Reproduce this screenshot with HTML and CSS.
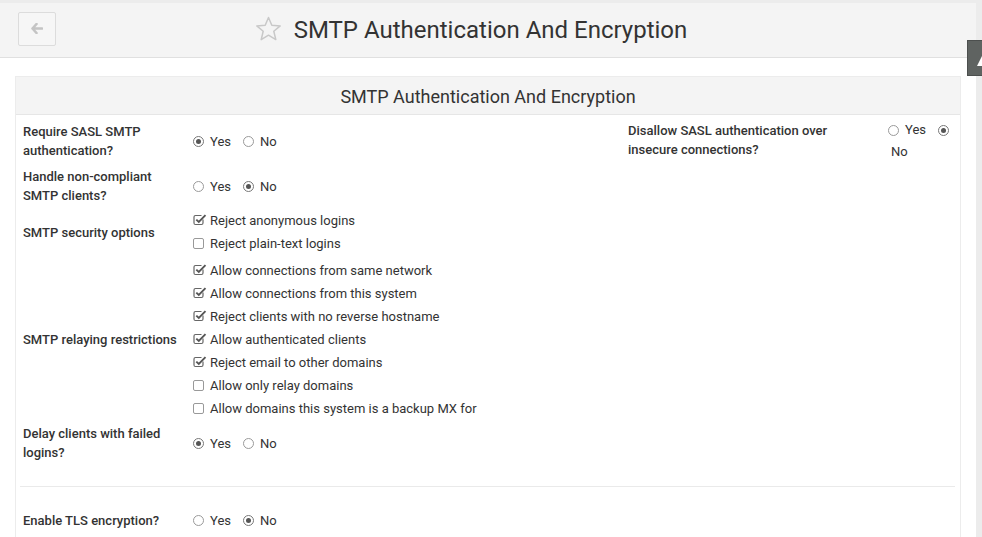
FILE: index.html
```html
<!DOCTYPE html>
<html>
<head>
<meta charset="utf-8">
<link rel="stylesheet" href="styles.css">
</head>
<body>
<div class="page">
  <header class="topbar">
    <div class="back-cell">
      <button class="back-btn" aria-label="Back">
        <svg width="12" height="11" viewBox="0 0 12 11"><path d="M5.5 1 L1.5 5.5 L5.5 10 M1.5 5.5 H11" fill="none" stroke="#c4c4c4" stroke-width="2.6" stroke-linejoin="round" stroke-linecap="round"/></svg>
      </button>
    </div>
    <div class="title-group">
      <svg class="star" width="27" height="26" viewBox="0 0 27 26"><path d="M13.5 1.5 L16.8 9.3 L25.2 9.9 L18.8 15.3 L20.8 23.6 L13.5 19.2 L6.2 23.6 L8.2 15.3 L1.8 9.9 L10.2 9.3 Z" fill="none" stroke="#c8c8c8" stroke-width="1.5" stroke-linejoin="round"/></svg>
      <h1 class="title">SMTP Authentication And Encryption</h1>
    </div>
    <div></div>
  </header>

  <main class="content">
    <section class="panel">
      <div class="panel-heading">SMTP Authentication And Encryption</div>
      <div class="panel-body">
        <div class="form-grid">
          <div class="label mid">Require SASL SMTP authentication?</div>
          <div class="inputs mid">
            <span class="opt"><i class="radio on"></i>Yes</span>
            <span class="opt"><i class="radio"></i>No</span>
          </div>
          <div class="label top">Disallow SASL authentication over insecure connections?</div>
          <div class="inputs narrow">
            <div class="nline"><span class="opt"><i class="radio"></i>Yes</span><i class="radio on"></i></div>
            <div class="nline second">No</div>
          </div>

          <div class="label mid">Handle non-compliant SMTP clients?</div>
          <div class="inputs mid span3">
            <span class="opt"><i class="radio"></i>Yes</span>
            <span class="opt"><i class="radio on"></i>No</span>
          </div>

          <div class="label mid">SMTP security options</div>
          <div class="checks span3">
            <div class="check"><svg class="cb" width="14" height="13" viewBox="0 0 14 13"><path d="M10 6.5 V10 Q10 11.5 8.5 11.5 H2.5 Q1 11.5 1 10 V4 Q1 2.5 2.5 2.5 H8.5" fill="none" stroke="#666" stroke-width="1.2"/><path d="M3.3 6.6 L5.8 9 L12.5 2.2" fill="none" stroke="#555" stroke-width="1.9"/></svg>Reject anonymous logins</div>
            <div class="check"><i class="box"></i>Reject plain-text logins</div>
          </div>

          <div class="label mid">SMTP relaying restrictions</div>
          <div class="checks span3">
            <div class="check"><svg class="cb" width="14" height="13" viewBox="0 0 14 13"><path d="M10 6.5 V10 Q10 11.5 8.5 11.5 H2.5 Q1 11.5 1 10 V4 Q1 2.5 2.5 2.5 H8.5" fill="none" stroke="#666" stroke-width="1.2"/><path d="M3.3 6.6 L5.8 9 L12.5 2.2" fill="none" stroke="#555" stroke-width="1.9"/></svg>Allow connections from same network</div>
            <div class="check"><svg class="cb" width="14" height="13" viewBox="0 0 14 13"><path d="M10 6.5 V10 Q10 11.5 8.5 11.5 H2.5 Q1 11.5 1 10 V4 Q1 2.5 2.5 2.5 H8.5" fill="none" stroke="#666" stroke-width="1.2"/><path d="M3.3 6.6 L5.8 9 L12.5 2.2" fill="none" stroke="#555" stroke-width="1.9"/></svg>Allow connections from this system</div>
            <div class="check"><svg class="cb" width="14" height="13" viewBox="0 0 14 13"><path d="M10 6.5 V10 Q10 11.5 8.5 11.5 H2.5 Q1 11.5 1 10 V4 Q1 2.5 2.5 2.5 H8.5" fill="none" stroke="#666" stroke-width="1.2"/><path d="M3.3 6.6 L5.8 9 L12.5 2.2" fill="none" stroke="#555" stroke-width="1.9"/></svg>Reject clients with no reverse hostname</div>
            <div class="check"><svg class="cb" width="14" height="13" viewBox="0 0 14 13"><path d="M10 6.5 V10 Q10 11.5 8.5 11.5 H2.5 Q1 11.5 1 10 V4 Q1 2.5 2.5 2.5 H8.5" fill="none" stroke="#666" stroke-width="1.2"/><path d="M3.3 6.6 L5.8 9 L12.5 2.2" fill="none" stroke="#555" stroke-width="1.9"/></svg>Allow authenticated clients</div>
            <div class="check"><svg class="cb" width="14" height="13" viewBox="0 0 14 13"><path d="M10 6.5 V10 Q10 11.5 8.5 11.5 H2.5 Q1 11.5 1 10 V4 Q1 2.5 2.5 2.5 H8.5" fill="none" stroke="#666" stroke-width="1.2"/><path d="M3.3 6.6 L5.8 9 L12.5 2.2" fill="none" stroke="#555" stroke-width="1.9"/></svg>Reject email to other domains</div>
            <div class="check"><i class="box"></i>Allow only relay domains</div>
            <div class="check"><i class="box"></i>Allow domains this system is a backup MX for</div>
          </div>

          <div class="label mid">Delay clients with failed logins?</div>
          <div class="inputs mid span3">
            <span class="opt"><i class="radio on"></i>Yes</span>
            <span class="opt"><i class="radio"></i>No</span>
          </div>
        </div>

        <hr class="sep">

        <div class="form-grid">
          <div class="label mid">Enable TLS encryption?</div>
          <div class="inputs mid span3">
            <span class="opt"><i class="radio"></i>Yes</span>
            <span class="opt"><i class="radio on"></i>No</span>
          </div>
        </div>
      </div>
    </section>
  </main>
</div>
<div class="side-tab"><svg width="8" height="14" viewBox="0 0 8 14"><path d="M0 13 L6 1 L8 1 L8 13 Z" fill="#fff"/></svg></div>
</body>
</html>
```

FILE: styles.css
```css
html, body {
  margin: 0;
  padding: 0;
}
body {
  background: #ececec;
  font-family: Roboto, "Liberation Sans", Arial, sans-serif;
  color: #333;
  font-size: 13px;
  height: 537px;
  overflow: hidden;
}
.page {
  width: 976px;
  margin-top: 3px;
  background: #fff;
  min-height: 534px;
}
.topbar {
  height: 55px;
  background: #f4f4f4;
  border-bottom: 1px solid #e0e0e0;
  display: grid;
  grid-template-columns: 1fr auto 1fr;
  align-items: center;
  box-sizing: border-box;
  padding: 0 18px;
}
.back-btn {
  width: 38px;
  height: 34px;
  margin-top: -3px;
  border: 1px solid #dcdcdc;
  background: #f6f6f6;
  border-radius: 2px;
  display: flex;
  align-items: center;
  justify-content: center;
  padding: 0;
}
.title-group {
  display: flex;
  align-items: center;
  gap: 12px;
  padding-right: 34px;
}
.star { display: block; margin-top: -2px; }
.title {
  margin: 0;
  font-weight: 400;
  font-size: 24px;
  color: #333;
  letter-spacing: 0;
}
.content {
  padding: 18px 15px 0 15px;
}
.panel {
  border: 1px solid #ececec;
  border-bottom: none;
  min-height: 470px;
}
.panel-heading {
  height: 38px;
  padding-top: 1px;
  box-sizing: border-box;
  background: #f4f4f4;
  border-bottom: 1px solid #e6e6e6;
  display: flex;
  align-items: center;
  justify-content: center;
  font-size: 18px;
  color: #333;
}
.panel-body {
  padding: 4px 0 0 7px;
}
.form-grid {
  display: grid;
  grid-template-columns: 170px 435px 260px 1fr;
  row-gap: 4px;
  line-height: 19px;
}
.label {
  font-weight: 500;
  color: #333;
  padding-right: 10px;
}
.mid { align-self: center; }
.top { padding-top: 2px; align-self: start; }
.span3 { grid-column: 2 / 5; }
.inputs {
  display: flex;
  align-items: center;
}
.opt {
  display: inline-flex;
  align-items: center;
  margin-right: 12px;
}
.radio {
  display: inline-block;
  width: 11px;
  height: 11px;
  box-sizing: border-box;
  border: 1px solid #9a9a9a;
  border-radius: 50%;
  margin-right: 6px;
  position: relative;
  background: #fff;
}
.radio.on {
  border-color: #777;
}
.radio.on::after {
  content: "";
  position: absolute;
  left: 2px;
  top: 2px;
  width: 5px;
  height: 5px;
  border-radius: 50%;
  background: #555;
}
.inputs.narrow {
  display: block;
  line-height: 22px;
  align-self: start;
}
.nline {
  display: flex;
  align-items: center;
}
.nline .opt { margin-right: 12px; }
.nline.second { padding-left: 3px; }
.checks {
  display: flex;
  flex-direction: column;
}
.check {
  display: flex;
  align-items: center;
  height: 23px;
}
.cb {
  display: block;
  margin-right: 3px;
  margin-top: -2px;
}
.box {
  display: inline-block;
  width: 11px;
  height: 11px;
  box-sizing: border-box;
  border: 1px solid #999;
  border-radius: 2px;
  margin-right: 6px;
}
.sep {
  border: none;
  border-top: 1px solid #eaeaea;
  margin: 24px 5px 24px -3px;
}
.side-tab {
  position: absolute;
  left: 967px;
  top: 40px;
  width: 16px;
  height: 36px;
  box-sizing: border-box;
  background: #5f6361;
  border: 1px solid #4c4f4e;
  overflow: hidden;
}
.side-tab svg {
  position: absolute;
  left: 9px;
  top: 12px;
}
```
